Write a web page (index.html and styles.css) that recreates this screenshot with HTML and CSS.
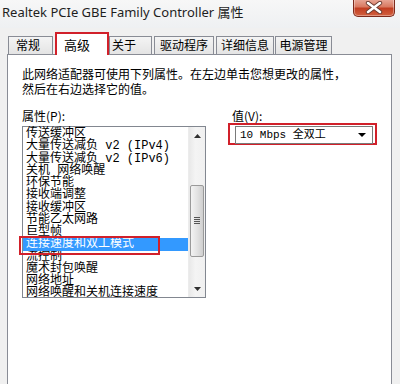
FILE: index.html
```html
<!DOCTYPE html>
<html>
<head>
<meta charset="utf-8">
<link rel="stylesheet" href="styles.css">
</head>
<body>
<div class="window">
  <div class="titlebar">
    <span class="title">Realtek PCIe GBE Family Controller 属性</span>
    <div class="close">
      <svg width="18" height="13" viewBox="0 0 18 13"><path d="M3 2 L15 11 M15 2 L3 11" stroke="#6a3a30" stroke-width="4.4" stroke-linecap="round"/><path d="M3 2 L15 11 M15 2 L3 11" stroke="#ffffff" stroke-width="2.6" stroke-linecap="round"/></svg>
    </div>
  </div>
  <div class="body">
    <div class="tabs">
      <div class="tab t1">常规</div>
      <div class="tab active">高级</div>
      <div class="tab t3">关于</div>
      <div class="tab t4">驱动程序</div>
      <div class="tab t5">详细信息</div>
      <div class="tab t6">电源管理</div>
    </div>
    <div class="panel">
      <p class="desc">此网络适配器可使用下列属性。在左边单击您想更改的属性，<br>然后在右边选择它的值。</p>
      <div class="cols">
        <div class="left">
          <div class="label">属性(P):</div>
          <div class="listbox">
            <ul class="items">
              <li>传送缓冲区</li>
              <li>大量传送减负 v2 (IPv4)</li>
              <li>大量传送减负 v2 (IPv6)</li>
              <li>关机 网络唤醒</li>
              <li>环保节能</li>
              <li>接收端调整</li>
              <li>接收缓冲区</li>
              <li>节能乙太网路</li>
              <li>巨型帧</li>
              <li class="selected">连接速度和双工模式</li>
              <li>流控制</li>
              <li>魔术封包唤醒</li>
              <li>网络地址</li>
              <li>网络唤醒和关机连接速度</li>
            </ul>
            <div class="scrollbar">
              <div class="sbtn"><svg width="7" height="4" viewBox="0 0 7 4"><path d="M0 4 L3.5 0 L7 4Z" fill="#303030"/></svg></div>
              <div class="track">
                <div class="thumb"><span class="grip"></span></div>
              </div>
              <div class="sbtn"><svg width="7" height="4" viewBox="0 0 7 4"><path d="M0 0 L3.5 4 L7 0Z" fill="#303030"/></svg></div>
            </div>
          </div>
        </div>
        <div class="right">
          <div class="label">值(V):</div>
          <div class="mark">
            <div class="select">
              <span class="value">10 Mbps 全双工</span>
              <svg width="8" height="4" viewBox="0 0 8 4"><path d="M0 0 L8 0 L4 4Z" fill="#000"/></svg>
            </div>
          </div>
        </div>
      </div>
    </div>
  </div>
</div>
</body>
</html>
```
FILE: styles.css
```css
* { box-sizing: border-box; }
html, body { margin: 0; padding: 0; }
body {
  width: 400px;
  height: 384px;
  overflow: hidden;
  background: #f0f0f0;
  font-family: "Liberation Mono", "Noto Sans CJK SC", monospace;
}
.window {
  width: 400px;
  height: 384px;
  display: flex;
  flex-direction: column;
  background: #f0f0f0;
}
.titlebar {
  height: 28px;
  flex: none;
  display: flex;
  align-items: flex-start;
  justify-content: space-between;
  background: linear-gradient(#f7f7f7, #eef0f2);
}
.title {
  font-family: "Noto Sans", "Noto Sans CJK SC", sans-serif;
  font-size: 13px;
  line-height: 16px;
  color: #1e1e1e;
  margin: 4px 0 0 2px;
  letter-spacing: 0;
}
.close {
  width: 42px;
  height: 18px;
  margin-right: 5px;
  margin-top: -1px;
  border: 1px solid #7d2a1c;
  border-top: none;
  border-radius: 0 0 5px 5px;
  background: linear-gradient(#e9aa9b 0%, #d97a62 45%, #c23e22 55%, #d2603f 100%);
  box-shadow: inset 0 0 0 1px rgba(255,255,255,0.35);
  display: flex;
  align-items: center;
  justify-content: center;
}
.body {
  flex: 1;
  padding: 4px 8px 0 7px;
  display: flex;
  flex-direction: column;
}
.tabs {
  display: flex;
  align-items: flex-end;
  padding-left: 1px;
  height: 22px;
  position: relative;
  z-index: 1;
}
.tab {
  font-family: "Noto Sans CJK SC", sans-serif;
  font-size: 12px;
  height: 18px;
  line-height: 16px;
  padding: 0;
  text-align: center;
  white-space: nowrap;
  border: 1px solid #898c95;
  border-bottom: none;
  background: linear-gradient(#f4f4f4, #e4e4e4);
  color: #000;
}
.t1 { width: 45px; text-align: left; padding-left: 7px; }
.t3 { width: 43px; text-align: left; padding-left: 2px; }
.t4 { width: 60px; margin-left: 2px; }
.t5 { width: 58px; margin-left: 2px; }
.t6 { width: 57px; margin-left: 1px; }
.tab.active {
  height: 23px;
  width: 54px;
  margin-left: 2px;
  margin-bottom: -1px;
  padding: 3px 0 0 7px;
  text-align: left;
  border: 2px solid #d1202a;
  border-bottom: none;
  background: #ffffff;
  font-size: 13px;
}
.panel {
  flex: 1;
  background: #ffffff;
  border: 1px solid #898c95;
  border-bottom: none;
  padding: 11px 14px 0 14px;
}
.desc {
  margin: 0;
  font-family: "Noto Sans CJK SC", sans-serif;
  font-size: 12px;
  line-height: 15px;
  color: #000;
}
.cols {
  display: flex;
  gap: 26px;
  margin-top: 12px;
}
.left { width: 185px; }
.label {
  font-family: "Noto Sans CJK SC", sans-serif;
  font-size: 12px;
  line-height: 15px;
  height: 15px;
}
.listbox {
  margin-top: 3px;
  height: 172px;
  border: 1px solid #828790;
  display: flex;
  background: #fff;
}
.items {
  list-style: none;
  margin: 0;
  padding: 0;
  flex: 1;
  padding-top: 1px;
}
.items li {
  font-size: 12px;
  line-height: 12.25px;
  height: 12.25px;
  padding-left: 3px;
  white-space: nowrap;
  color: #000;
}
.items li.selected {
  background: #3399ff;
  color: #fff;
  position: relative;
}
.items li.selected::after {
  content: "";
  position: absolute;
  left: -4px;
  top: -2px;
  width: 137px;
  height: 15px;
  border: 2px solid #d1202a;
}
.scrollbar {
  width: 17px;
  display: flex;
  flex-direction: column;
  background: linear-gradient(90deg, #e8e8e8, #f4f4f4 40%, #f0f0f0);
  border-left: 1px solid #ececec;
}
.sbtn {
  height: 17px;
  display: flex;
  align-items: center;
  justify-content: center;
}
.track {
  flex: 1;
  padding-top: 41px;
}
.thumb {
  height: 72px;
  margin: 0 1px;
  border: 1px solid #9a9a9a;
  border-radius: 2px;
  background: linear-gradient(90deg, #f3f3f3, #e3e3e3 50%, #cfcfcf);
  display: flex;
  align-items: center;
  justify-content: center;
}
.grip {
  width: 6px;
  height: 8px;
  background: repeating-linear-gradient(#555 0 1px, transparent 1px 2px);
}
.right {
  margin-left: -4px;
}
.right .label { margin-left: 4px; }
.mark {
  width: 149px;
  height: 22px;
  border: 2px solid #d1202a;
  padding: 1px 2px 1px 5px;
}
.select {
  height: 18px;
  border: 1px solid #7a7a7a;
  background: #fff;
  display: flex;
  align-items: center;
  justify-content: space-between;
  padding: 0 6px 0 4px;
}
.value {
  font-size: 11px;
  line-height: 14px;
  white-space: nowrap;
}
```
